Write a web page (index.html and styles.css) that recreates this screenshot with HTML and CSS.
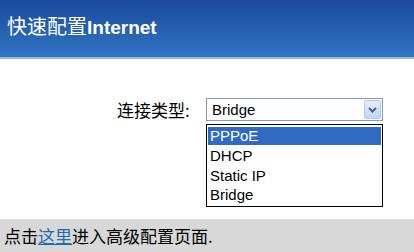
FILE: index.html
```html
<!DOCTYPE html>
<html>
<head>
<meta charset="utf-8">
<link rel="stylesheet" href="styles.css">
</head>
<body>
<div class="header"><span class="title">快速配置<b>Internet</b></span></div>
<div class="main">
  <div class="row">
    <div class="label">连接类型:</div>
    <div class="field">
      <div class="select">
        <span class="value">Bridge</span>
        <span class="arrow"><svg width="9" height="6" viewBox="0 0 9 6"><path d="M1 1 L4.5 4.5 L8 1" fill="none" stroke="#4d6185" stroke-width="2"/></svg></span>
      </div>
      <div class="list">
        <div class="opt sel">PPPoE</div>
        <div class="opt">DHCP</div>
        <div class="opt">Static IP</div>
        <div class="opt">Bridge</div>
      </div>
    </div>
  </div>
</div>
<div class="footer">点击<a class="link" href="#">这里</a>进入高级配置页面.</div>
</body>
</html>
```
FILE: styles.css
```css
html, body { margin: 0; padding: 0; }
body { width: 414px; height: 252px; overflow: hidden; background: #fff; font-family: "Liberation Sans", "Noto Sans CJK SC", sans-serif; }
.header {
  background: linear-gradient(#1a4a9e, #2a68b6 70%, #3276c4);
  border-bottom: 2px solid #9ab8dc;
  display: flex;
  align-items: center;
  padding-left: 7px;
  padding-bottom: 6px;
  box-sizing: border-box;
  height: 59px;
}
.title { color: #fff; font-size: 20px; font-family: "Noto Sans CJK SC", sans-serif; }
.title b { font-family: "Liberation Sans", sans-serif; font-weight: bold; font-size: 19px; }
.main { height: 160px; box-sizing: border-box; padding-top: 39px; }
.row { display: flex; padding-left: 117px; }
.label { width: 89px; font-size: 17px; font-family: "Noto Sans CJK SC", sans-serif; color: #000; line-height: 23px; }
.field { width: 177px; }
.select {
  height: 23px; box-sizing: border-box;
  border: 1px solid #7f9db9;
  display: flex; align-items: center; justify-content: space-between;
  padding: 1px 1px 1px 5px;
}
.value { font-size: 15px; color: #000; }
.arrow {
  width: 17px; height: 19px; box-sizing: border-box;
  background: linear-gradient(#e6eefc, #c0d3f7);
  border: 1px solid #b5c8ef; border-radius: 2px;
  display: flex; align-items: center; justify-content: center;
}
.list {
  margin-top: 3px; height: 83px; box-sizing: border-box;
  border: 1px solid #000; padding: 2px 1px;
}
.opt { height: 19.5px; line-height: 19px; font-size: 15px; padding-left: 2px; color: #000; }
.opt.sel { background: #316ac5; color: #fff; height: 18px; line-height: 18px; margin-bottom: 1px; }
.footer {
  height: 33px; box-sizing: border-box;
  background: #d8d8d8; border-top: 1px solid #e6e6e6;
  font-size: 17px; font-family: "Noto Sans CJK SC", sans-serif;
  padding-left: 4px; line-height: 32px; color: #000;
}
.link { color: #2469a8; text-decoration: underline; }
```
